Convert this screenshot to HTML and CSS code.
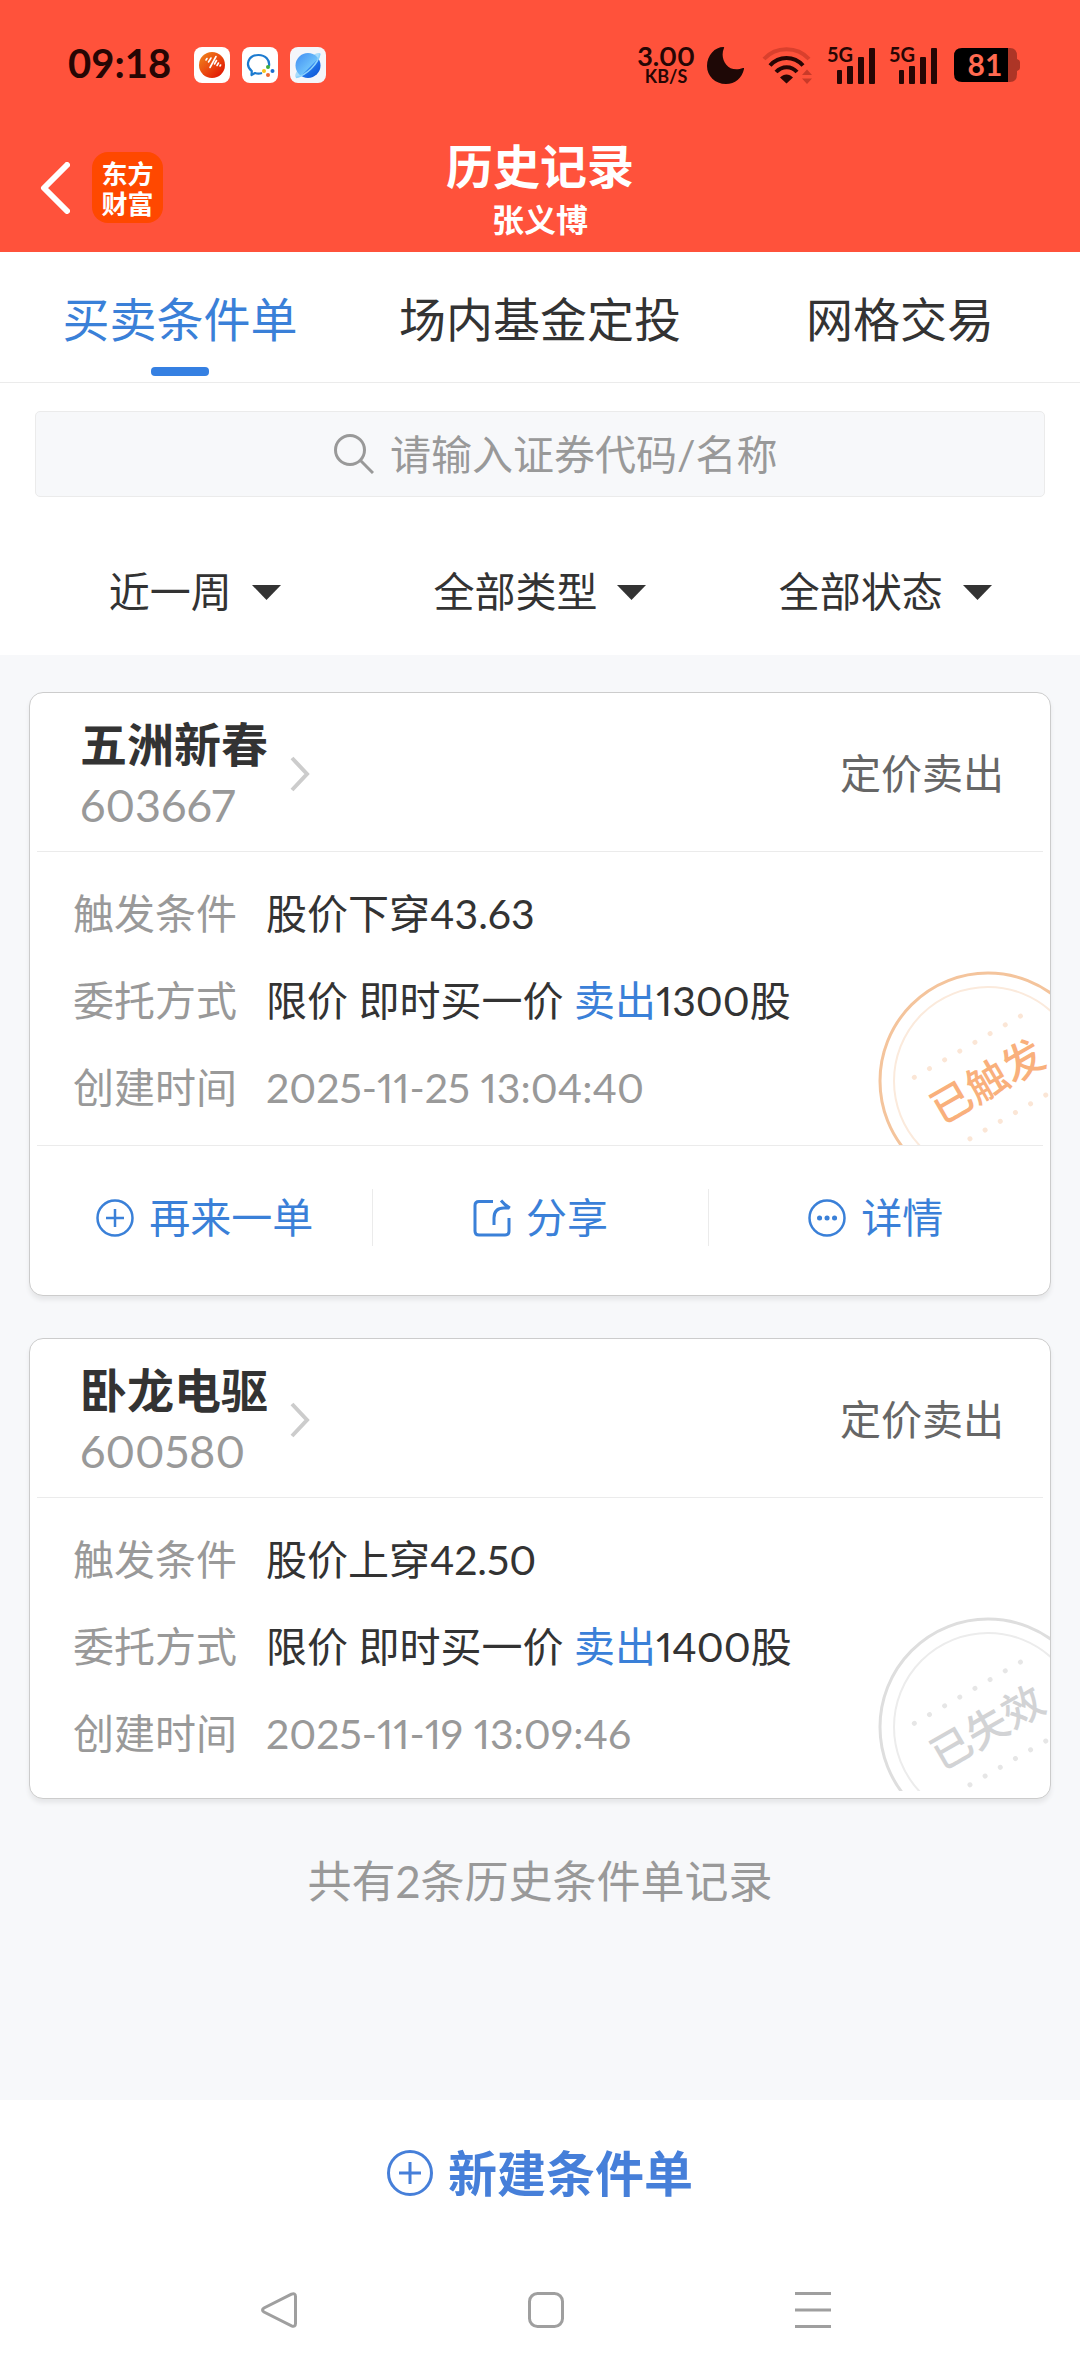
FILE: index.html
```html
<!DOCTYPE html>
<html lang="zh-CN">
<head>
  <meta charset="utf-8">
  <meta name="viewport" content="width=device-width, initial-scale=1">
  <title>历史记录</title>
  <link rel="stylesheet" href="styles.css">
</head>
<body>
  <header class="header">
    <div class="status">
      <div class="status-side">
        <time class="clock">09:18</time>
        <div class="apps">
          <svg class="app" viewBox="0 0 36 36">
            <defs>
              <linearGradient id="sun" x1="0" y1="0" x2="1" y2="1"><stop offset="0" stop-color="#f08a1c"/><stop offset=".5" stop-color="#ea4a10"/><stop offset="1" stop-color="#dd0a00"/></linearGradient>
            </defs>
            <rect width="36" height="36" rx="8" fill="#fff"/>
            <circle cx="18" cy="18" r="13" fill="url(#sun)"/>
            <path d="M12 13l1-1.500M14.500 15l2.500-4M16 20.500l6-11M20.500 17l2-3.500M23 18.500l1.500-2.500M26 19l.6-1" stroke="#fff" stroke-width="1.600" stroke-linecap="round"/>
          </svg>
          <svg class="app" viewBox="0 0 36 36">
            <rect width="36" height="36" rx="8" fill="#fff"/>
            <path d="M20 26c-2.500.8-5 .7-7 0l-3.500 2 .3-3.800C2.500 18 6.500 8 16.500 8c7 0 11.500 5 10.500 11" fill="none" stroke="#1c7bd0" stroke-width="2.200" stroke-linejoin="round"/>
            <circle cx="26" cy="20" r="2" fill="#3fae3c"/><circle cx="30.500" cy="24" r="2" fill="#1c6fd0"/><circle cx="26" cy="28" r="2" fill="#ee6a35"/><circle cx="22" cy="24" r="2" fill="#f8c51c"/>
          </svg>
          <svg class="app" viewBox="0 0 36 36">
            <defs>
              <linearGradient id="ball" x1="0" y1="0" x2="1" y2="1"><stop offset="0" stop-color="#3f8cf2"/><stop offset=".55" stop-color="#6cc0fb"/><stop offset=".6" stop-color="#1f74ea"/><stop offset="1" stop-color="#0a4fd0"/></linearGradient>
            </defs>
            <rect width="36" height="36" rx="8" fill="#f4f6fa"/>
            <path d="M7 24C4 29 5 32 9 30.500 19 27 28 17 30 8c.5-2.500-2-2.500-5-1" fill="#a9dcfb"/>
            <circle cx="18" cy="18.500" r="12.500" fill="url(#ball)"/>
            <path d="M6 30.500C17 28 28 17 30 6.500" fill="none" stroke="#8dd3fd" stroke-width="1.500"/>
          </svg>
        </div>
      </div>
      <div class="status-side">
        <div class="speed"><span class="speed-value">3.00</span><span class="speed-unit">KB/S</span></div>
        <svg class="moon" viewBox="0 0 37 37"><path d="M17 1C12 12 21 27 36 21c.8-.3 1.200.2 1 1C35 31 28 37 19 37 8 37 0 29 0 19 0 8 8 0 16.500 0c.8 0 .8.500.5 1z" fill="#1e0806"/></svg>
        <svg class="wifi" viewBox="0 0 51 37" fill="none">
          <path d="M2 12C14-1 35-1 47 12" stroke="#d9402d" stroke-width="4"/>
          <path d="M8 18.500c9-10 24-10 33 0M14 25c6-6.500 15.500-6.500 21 0" stroke="#260604" stroke-width="4"/>
          <path d="M18 30.500c4-4 9-4 13 0l-6.500 6z" fill="#260604"/>
          <path d="M40 28l5-5.500 5 5.500zM40 31.500h10L45 37z" fill="#c93a29"/>
        </svg>
        <svg class="signal" viewBox="0 0 48 37" fill="#260604">
          <text class="signal-text" x="0" y="15">5G</text>
          <rect x="10" y="23" width="5" height="14" rx="1"/><rect x="20" y="19" width="6" height="18" rx="1"/><rect x="31" y="10" width="6" height="27" rx="1"/><rect x="42" y="1" width="6" height="36" rx="1"/>
        </svg>
        <svg class="signal" viewBox="0 0 48 37" fill="#260604">
          <text class="signal-text" x="0" y="15">5G</text>
          <rect x="10" y="23" width="5" height="14" rx="1"/><rect x="20" y="19" width="6" height="18" rx="1"/><rect x="31" y="10" width="6" height="27" rx="1"/><rect x="42" y="1" width="6" height="36" rx="1"/>
        </svg>
        <svg class="battery" viewBox="0 0 66 34">
          <path d="M54 0h2q7 0 7 8v3q3 1 3 3v6q0 2-3 3v3q0 8-7 8h-2z" fill="#ad3526"/>
          <path d="M54 0H8Q0 0 0 8v18q0 8 8 8h46z" fill="#000"/>
          <text class="battery-text" x="31" y="28" text-anchor="middle">81</text>
        </svg>
      </div>
    </div>
    <div class="titlebar">
      <div class="titlebar-left">
        <button class="icon-button" aria-label="返回"><svg class="back" viewBox="0 0 30 52"><path d="M27 3L4 26l23 23" fill="none" stroke="#fff" stroke-width="6" stroke-linecap="round" stroke-linejoin="round"/></svg></button>
        <a class="logo" href="#">东方<br>财富</a>
      </div>
      <div class="titles">
        <h1 class="title">历史记录</h1>
        <p class="subtitle">张义博</p>
      </div>
    </div>
  </header>

  <nav class="tabs">
    <a class="tab tab-active" href="#">买卖条件单</a>
    <a class="tab" href="#">场内基金定投</a>
    <a class="tab" href="#">网格交易</a>
  </nav>

  <section class="query">
    <label class="search">
      <svg class="search-icon" viewBox="0 0 40 40" fill="none" stroke="#999" stroke-width="3"><circle cx="16" cy="16" r="14.500"/><path d="M26.500 26.500L39 39"/></svg>
      <input class="search-input" type="text" placeholder="请输入证券代码/名称" aria-label="请输入证券代码/名称">
    </label>
    <div class="filters">
      <label class="filter"><select class="filter-select" aria-label="时间"><option>近一周</option></select><svg class="caret" viewBox="0 0 29 15"><path d="M0 0h29L14.500 15z" fill="#333"/></svg></label>
      <label class="filter"><select class="filter-select" aria-label="类型"><option>全部类型</option></select><svg class="caret" viewBox="0 0 29 15"><path d="M0 0h29L14.500 15z" fill="#333"/></svg></label>
      <label class="filter"><select class="filter-select" aria-label="状态"><option>全部状态</option></select><svg class="caret" viewBox="0 0 29 15"><path d="M0 0h29L14.500 15z" fill="#333"/></svg></label>
    </div>
  </section>

  <main class="list">
    <article class="card">
      <div class="card-head">
        <a class="stock" href="#">
          <span class="stock-text"><strong class="stock-name">五洲新春</strong><span class="stock-code">603667</span></span>
          <svg class="chevron" viewBox="0 0 20 36"><path d="M2 2l15 16L2 34" fill="none" stroke="#ccc" stroke-width="4"/></svg>
        </a>
        <span class="kind">定价卖出</span>
      </div>
      <div class="card-body">
        <dl class="facts">
          <dt>触发条件</dt><dd>股价下穿43.63</dd>
          <dt>委托方式</dt><dd>限价 即时买一价 <span class="sell">卖出</span>1300股</dd>
          <dt>创建时间</dt><dd class="muted">2025-11-25 13:04:40</dd>
        </dl>
        <svg class="stamp stamp-done" viewBox="0 0 220 220">
          <circle class="stamp-outer" cx="110" cy="110" r="108"/>
          <circle class="stamp-inner" cx="110" cy="110" r="94"/>
          <g transform="rotate(-30 110 110)">
            <path class="stamp-dots" d="M48 70H171M48 151H171"/>
            <text class="stamp-text" x="109" y="125" text-anchor="middle">已触发</text>
          </g>
        </svg>
      </div>
      <div class="actions">
        <button class="action"><svg class="action-icon" viewBox="0 0 38 38"><circle cx="19" cy="19" r="17.500"/><path d="M10 19h18M19 10v18"/></svg>再来一单</button>
        <button class="action"><svg class="action-icon" viewBox="0 0 38 38"><path d="M20 2.500H6q-4 0-4 4V32q0 4 4 4h26q4 0 4-4V19M21 26V19q0-10 10-10h5M28 1.500q4 5 9 7.500" stroke-width="3"/></svg>分享</button>
        <button class="action"><svg class="action-icon" viewBox="0 0 38 38"><circle cx="19" cy="19" r="17.500"/><path d="M11.500 19h.1M19 19h.1M26.500 19h.1" stroke-width="5" stroke-linecap="round"/></svg>详情</button>
      </div>
    </article>

    <article class="card card-plain">
      <div class="card-head">
        <a class="stock" href="#">
          <span class="stock-text"><strong class="stock-name">卧龙电驱</strong><span class="stock-code">600580</span></span>
          <svg class="chevron" viewBox="0 0 20 36"><path d="M2 2l15 16L2 34" fill="none" stroke="#ccc" stroke-width="4"/></svg>
        </a>
        <span class="kind">定价卖出</span>
      </div>
      <div class="card-body">
        <dl class="facts">
          <dt>触发条件</dt><dd>股价上穿42.50</dd>
          <dt>委托方式</dt><dd>限价 即时买一价 <span class="sell">卖出</span>1400股</dd>
          <dt>创建时间</dt><dd class="muted">2025-11-19 13:09:46</dd>
        </dl>
        <svg class="stamp stamp-void" viewBox="0 0 220 220">
          <circle class="stamp-outer" cx="110" cy="110" r="108"/>
          <circle class="stamp-inner" cx="110" cy="110" r="94"/>
          <g transform="rotate(-30 110 110)">
            <path class="stamp-dots" d="M48 70H171M48 151H171"/>
            <text class="stamp-text" x="109" y="125" text-anchor="middle">已失效</text>
          </g>
        </svg>
      </div>
    </article>

    <p class="total">共有2条历史条件单记录</p>
  </main>

  <footer class="footer">
    <button class="create"><svg class="create-icon" viewBox="0 0 46 46"><circle cx="23" cy="23" r="21.500"/><path d="M12 23h22M23 12v22"/></svg>新建条件单</button>
    <nav class="system">
      <button class="icon-button" aria-label="返回"><svg class="key" viewBox="0 0 36 36"><path d="M30.500 2.200L3 16q-3 2 0 4l27.500 13.800q4 1.500 4-2.300V4.500q0-3.800-4-2.300z"/></svg></button>
      <button class="icon-button" aria-label="主页"><svg class="key" viewBox="0 0 36 36"><rect x="1.500" y="1.500" width="33" height="33" rx="8"/></svg></button>
      <button class="icon-button" aria-label="最近任务"><svg class="key" viewBox="0 0 36 36"><path d="M0 1.500h36M0 18h36M0 34.500h36"/></svg></button>
    </nav>
  </footer>
</body>
</html>
```
FILE: styles.css
```css
* {
  box-sizing: border-box;
}

body {
  margin: 0;
  min-height: 100vh;
  display: flex;
  flex-direction: column;
  background: #f7f8fa;
  color: #333;
  font-family: Lato, "Noto Sans CJK SC", sans-serif;
  font-size: 41px;
  font-variant-numeric: proportional-nums;
  line-height: 48px;
}

h1, p, dl, dd {
  margin: 0;
}

a {
  color: inherit;
  text-decoration: none;
}

svg {
  display: block;
  flex: none;
}

button, input, select {
  margin: 0;
  padding: 0;
  border: 0;
  background: none;
  color: inherit;
  font: inherit;
}

/* Header */
.header {
  background: #ff523b;
  color: #fff;
  padding-top: 40px;
}

.status {
  display: flex;
  justify-content: space-between;
  align-items: center;
  height: 50px;
  padding: 0 60px 0 68px;
  color: #260604;
}

.status-side {
  display: flex;
  align-items: center;
}

.clock {
  font-size: 40px;
  font-variant-numeric: normal;
  font-weight: 700;
  line-height: 44px;
  padding-bottom: 4px;
}

.apps {
  display: flex;
  gap: 12px;
  margin-left: 23px;
}

.app {
  width: 36px;
  height: 36px;
}

.speed {
  display: flex;
  flex-direction: column;
  align-items: center;
  font-weight: 700;
}

.speed-value {
  font-size: 27px;
  line-height: 22px;
}

.speed-unit {
  font-size: 18px;
  line-height: 18px;
}

.moon {
  width: 37px;
  height: 37px;
  margin-left: 12px;
}

.wifi {
  width: 51px;
  height: 37px;
  margin-left: 18px;
}

.signal {
  width: 48px;
  height: 37px;
  margin-left: 14px;
  overflow: visible;
}

.signal-text {
  font: 700 20px Lato, sans-serif;
}

.battery {
  width: 66px;
  height: 34px;
  margin-left: 17px;
}

.battery-text {
  font: 700 30px Lato, sans-serif;
  fill: #ff6a50;
}

.titlebar {
  display: grid;
  grid-template-columns: 1fr auto 1fr;
  align-items: end;
  height: 162px;
  padding: 0 40px;
}

.titlebar-left {
  display: flex;
  align-items: center;
  gap: 22px;
  padding-bottom: 29px;
}

.icon-button {
  display: flex;
}

.back {
  width: 30px;
  height: 52px;
}

.logo {
  display: grid;
  place-content: center;
  width: 71px;
  height: 71px;
  border-radius: 16px;
  background: #ff4800;
  font-family: "Noto Sans CJK SC", sans-serif;
  font-size: 26px;
  font-weight: 700;
  line-height: 30px;
}

.titles {
  padding-bottom: 8px;
  text-align: center;
}

.title {
  font-size: 47px;
  line-height: 60px;
}

.subtitle {
  font-size: 32px;
  font-weight: 700;
  line-height: 48px;
}

/* Tabs */
.tabs {
  display: grid;
  grid-template-columns: repeat(3, 1fr);
  height: 131px;
  background: #fff;
  border-bottom: 1px solid #ebebeb;
}

.tab {
  display: flex;
  flex-direction: column;
  align-items: center;
  padding-top: 37px;
  font-size: 47px;
  line-height: 60px;
}

.tab-active {
  color: #3a80d8;
}

.tab-active::after {
  content: "";
  width: 58px;
  height: 9px;
  margin-top: 18px;
  border-radius: 4px;
  background: #3580e2;
}

/* Search and filters */
.query {
  background: #fff;
  padding: 28px 35px 39px;
}

.search {
  display: flex;
  justify-content: center;
  align-items: center;
  gap: 16px;
  height: 86px;
  padding-left: 30px;
  border: 1px solid #ebebeb;
  border-radius: 5px;
  background: #f7f8fa;
}

.search-icon {
  width: 40px;
  height: 40px;
}

.search-input {
  width: 386px;
  height: 60px;
  outline: 0;
}

.search-input::placeholder {
  color: #999;
  opacity: 1;
}

.filters {
  display: grid;
  grid-template-columns: repeat(3, 1fr);
  margin: 71px -13px 0;
}

.filter {
  display: flex;
  justify-content: center;
  align-items: center;
  gap: 20px;
  height: 48px;
}

.filter-select {
  appearance: none;
  height: 48px;
}

.caret {
  width: 29px;
  height: 15px;
}

/* Cards */
.list {
  flex: 1;
  padding: 37px 29px;
}

.card {
  margin-bottom: 42px;
  border: 1px solid #ccc;
  border-radius: 14px;
  background: #fff;
  box-shadow: 0 4px 4px #e6e7e9;
}

.card-plain {
  padding-bottom: 7px;
}

.card-head {
  display: flex;
  justify-content: space-between;
  align-items: center;
  height: 159px;
  margin: 0 7px;
  padding: 3px 39px 0 43px;
  border-bottom: 1px solid #ebebeb;
}

.stock {
  display: flex;
  align-items: center;
  gap: 22px;
}

.stock-text {
  display: flex;
  flex-direction: column;
}

.stock-name {
  font-size: 47px;
  line-height: 62px;
}

.stock-code {
  font-size: 45px;
  line-height: 60px;
  color: #999;
}

.chevron {
  width: 20px;
  height: 36px;
}

.kind {
  color: #666;
}

.card-body {
  position: relative;
  overflow: hidden;
  padding: 18px 43px 14px;
}

.facts {
  display: grid;
  grid-template-columns: auto 1fr;
  column-gap: 29px;
  line-height: 87px;
}

.facts dt,
.muted {
  color: #999;
}

.sell {
  color: #3a80d8;
}

/* The stamp lies over the card's corner and is cut by its edges */
.stamp {
  position: absolute;
  top: 119px;
  right: -48px;
  width: 220px;
  height: 220px;
}

.stamp-outer,
.stamp-inner,
.stamp-dots {
  fill: none;
  stroke-width: 3px;
}

.stamp-inner {
  stroke-width: 2px;
}

.stamp-dots {
  stroke-width: 5px;
  stroke-linecap: round;
  stroke-dasharray: 0 17.5;
}

.stamp-text {
  font-size: 41px;
  font-weight: 500;
}

.stamp-done .stamp-outer { stroke: #f4c49c; }
.stamp-done .stamp-inner { stroke: #fbeadc; }
.stamp-done .stamp-dots { stroke: #fbe6d6; }
.stamp-done .stamp-text { fill: #f9b07c; }
.stamp-void .stamp-outer { stroke: #dedede; }
.stamp-void .stamp-inner { stroke: #ececec; }
.stamp-void .stamp-dots { stroke: #e6e6e6; }
.stamp-void .stamp-text { fill: #d2d3d5; }

.actions {
  display: grid;
  grid-template-columns: repeat(3, 1fr);
  margin: 0 7px;
  padding: 43px 0 49px;
  border-top: 1px solid #ebebeb;
  color: #3a80d8;
}

.action {
  display: flex;
  justify-content: center;
  align-items: center;
  gap: 15px;
  height: 57px;
}

.action + .action {
  border-left: 1px solid #ebebeb;
}

.action-icon {
  width: 38px;
  height: 38px;
  fill: none;
  stroke: currentColor;
  stroke-width: 2.5px;
}

.total {
  font-size: 44px;
  line-height: 80px;
  color: #999;
  text-align: center;
}

/* Footer */
.footer {
  background: #fff;
}

.create {
  display: flex;
  justify-content: center;
  align-items: center;
  gap: 15px;
  width: 100%;
  height: 146px;
  color: #467fd9;
  font-size: 49px;
  font-weight: 700;
}

.create-icon {
  width: 46px;
  height: 46px;
  fill: none;
  stroke: currentColor;
  stroke-width: 3px;
}

.system {
  display: grid;
  grid-template-columns: repeat(3, 1fr);
  justify-items: center;
  padding: 46px 133px 48px 145px;
}

.key {
  width: 36px;
  height: 36px;
  fill: none;
  stroke: #9f9f9f;
  stroke-width: 3px;
}
```
